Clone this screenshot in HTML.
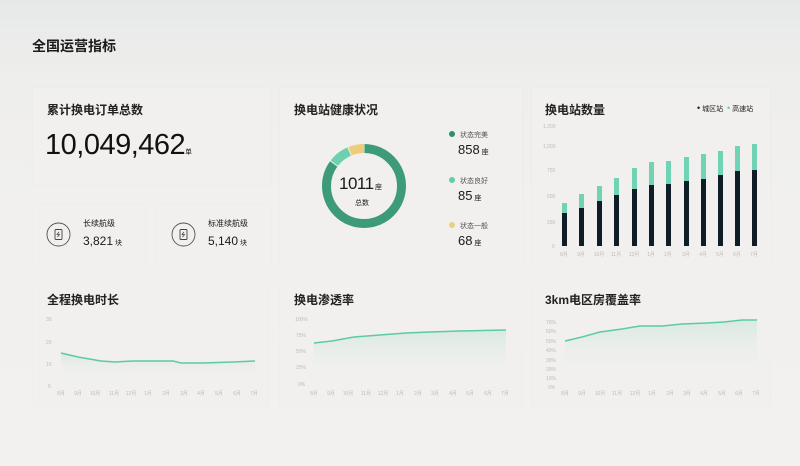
<!DOCTYPE html>
<html><head><meta charset="utf-8"><style>
*{margin:0;padding:0;box-sizing:border-box}
body{width:800px;height:466px;overflow:hidden;background:linear-gradient(#e7e9e9 0,#eeeeec 80px,#f1f0ee 200px,#f2f1ef 466px);font-family:"Liberation Sans","Noto Sans CJK SC",sans-serif;color:#1a1a1a;position:relative}
.c{position:absolute;background:#f1f0ee;box-shadow:0 0 3px rgba(0,0,0,0.03)}
.t{position:absolute;font-size:12px;font-weight:bold;color:#222}
.a{position:absolute}
</style></head><body>
<div class="a" style="left:32px;top:36px;font-size:14px;font-weight:bold">全国运营指标</div>

<div class="c" style="left:33px;top:88px;width:237px;height:97px"></div>
<div class="t" style="left:47px;top:101px">累计换电订单总数</div>
<div class="a" style="left:45px;top:129px;font-size:29px;letter-spacing:-0.5px;color:#111">10,049,462</div>
<div class="a" style="left:185px;top:147px;font-size:7px">单</div>

<div class="c" style="left:33px;top:205px;width:112px;height:63px"></div>
<div class="c" style="left:157px;top:205px;width:113px;height:63px"></div>
<svg class="a" style="left:46px;top:222px" width="25" height="25"><circle cx="12.5" cy="12.5" r="11.5" fill="none" stroke="#555" stroke-width="0.9"/><rect x="9" y="7.5" width="7" height="10" rx="1" fill="none" stroke="#444" stroke-width="0.9"/><path d="M13 10l-2 2.5h2.5l-2 2.5" fill="none" stroke="#444" stroke-width="0.8"/></svg>
<svg class="a" style="left:171px;top:222px" width="25" height="25"><circle cx="12.5" cy="12.5" r="11.5" fill="none" stroke="#555" stroke-width="0.9"/><rect x="9" y="7.5" width="7" height="10" rx="1" fill="none" stroke="#444" stroke-width="0.9"/><path d="M13 10l-2 2.5h2.5l-2 2.5" fill="none" stroke="#444" stroke-width="0.8"/></svg>
<div class="a" style="left:83px;top:218px;font-size:8px">长续航级</div>
<div class="a" style="left:83px;top:234px;font-size:12px">3,821<span style="font-size:7px"> 块</span></div>
<div class="a" style="left:208px;top:218px;font-size:8px">标准续航级</div>
<div class="a" style="left:208px;top:234px;font-size:12px">5,140<span style="font-size:7px"> 块</span></div>

<div class="c" style="left:280px;top:88px;width:242px;height:180px"></div>
<div class="t" style="left:294px;top:101px">换电站健康状况</div>
<svg class="a" style="left:318px;top:140px" width="92" height="92" viewBox="0 0 92 92">
<g transform="rotate(-90 46 46)" fill="none" stroke-width="9">
<circle cx="46" cy="46" r="37.5" stroke="#3d9b78" stroke-dasharray="199.5 236" stroke-dashoffset="-0.5"/>
<circle cx="46" cy="46" r="37.5" stroke="#6fd0b0" stroke-dasharray="19 236" stroke-dashoffset="-201"/>
<circle cx="46" cy="46" r="37.5" stroke="#edcc7a" stroke-dasharray="14.5 236" stroke-dashoffset="-221"/>
</g></svg>
<div class="a" style="left:339px;top:174px;font-size:17px;letter-spacing:-0.5px">1011<span style="font-size:7px"> 座</span></div>
<div class="a" style="left:355px;top:198px;font-size:7px">总数</div>
<div class="a" style="left:449px;top:131px;width:6px;height:6px;border-radius:3px;background:#2e8f6b"></div>
<div class="a" style="left:460px;top:130px;font-size:7px;color:#555">状态完美</div>
<div class="a" style="left:458px;top:142px;font-size:13px">858<span style="font-size:7px"> 座</span></div>
<div class="a" style="left:449px;top:177px;width:6px;height:6px;border-radius:3px;background:#5fcfa9"></div>
<div class="a" style="left:460px;top:176px;font-size:7px;color:#555">状态良好</div>
<div class="a" style="left:458px;top:188px;font-size:13px">85<span style="font-size:7px"> 座</span></div>
<div class="a" style="left:449px;top:222px;width:6px;height:6px;border-radius:3px;background:#eccf80"></div>
<div class="a" style="left:460px;top:221px;font-size:7px;color:#555">状态一般</div>
<div class="a" style="left:458px;top:233px;font-size:13px">68<span style="font-size:7px"> 座</span></div>

<div class="c" style="left:532px;top:88px;width:238px;height:180px"></div>
<div class="t" style="left:545px;top:101px">换电站数量</div>
<div class="a" style="left:697px;top:103px;font-size:7px"><span style="font-size:9px">•</span> 城区站 &nbsp;<span style="color:#5fcfa9;font-size:9px">•</span> 高速站</div>
<svg class="a" style="left:532px;top:115px" width="238" height="150" font-size="5" fill="#bbb" font-family="Liberation Sans">
<text x="11" y="13">1,200</text><text x="11" y="33">1,000</text><text x="15" y="57">750</text><text x="15" y="83">500</text><text x="15" y="109">250</text><text x="20" y="133">0</text>
<g id="bars"></g>
</svg>
<svg class="a" style="left:532px;top:115px" width="238" height="150">
<g fill="#6fd3b4">
<rect x="30" y="88" width="5" height="43"/><rect x="47" y="79" width="5" height="52"/><rect x="65" y="71" width="5" height="60"/><rect x="82" y="63" width="5" height="68"/><rect x="100" y="53" width="5" height="78"/><rect x="117" y="47" width="5" height="84"/><rect x="134" y="46" width="5" height="85"/><rect x="152" y="42" width="5" height="89"/><rect x="169" y="39" width="5" height="92"/><rect x="186" y="36" width="5" height="95"/><rect x="203" y="31" width="5" height="100"/><rect x="220" y="29" width="5" height="102"/>
</g>
<g fill="#0f1d26">
<rect x="30" y="98" width="5" height="33"/><rect x="47" y="93" width="5" height="38"/><rect x="65" y="86" width="5" height="45"/><rect x="82" y="80" width="5" height="51"/><rect x="100" y="74" width="5" height="57"/><rect x="117" y="70" width="5" height="61"/><rect x="134" y="69" width="5" height="62"/><rect x="152" y="66" width="5" height="65"/><rect x="169" y="64" width="5" height="67"/><rect x="186" y="60" width="5" height="71"/><rect x="203" y="56" width="5" height="75"/><rect x="220" y="55" width="5" height="76"/>
</g>
<g font-size="5" fill="#bbb" font-family="Liberation Sans,Noto Sans CJK SC" text-anchor="middle">
<text x="32" y="141">8月</text><text x="49" y="141">9月</text><text x="67" y="141">10月</text><text x="84" y="141">11月</text><text x="102" y="141">12月</text><text x="119" y="141">1月</text><text x="136" y="141">2月</text><text x="154" y="141">3月</text><text x="171" y="141">4月</text><text x="188" y="141">5月</text><text x="205" y="141">6月</text><text x="222" y="141">7月</text>
</g></svg>

<div class="c" style="left:33px;top:283px;width:235px;height:124px"></div>
<div class="t" style="left:47px;top:291px">全程换电时长</div>
<svg class="a" style="left:33px;top:283px" width="235" height="124" font-family="Liberation Sans,Noto Sans CJK SC">
<defs><linearGradient id="g" x1="0" y1="0" x2="0" y2="1"><stop offset="0" stop-color="#cfe6de" stop-opacity=".7"/><stop offset="1" stop-color="#f1f0ee" stop-opacity="0"/></linearGradient></defs>
<g font-size="5" fill="#bbb"><text x="13" y="38">30</text><text x="13" y="61">20</text><text x="13" y="83">10</text><text x="15" y="105">5</text></g>
<path d="M28 70L45 74L68 78L82 79L100 78L118 78L140 78L148 80L170 80L200 79L222 78V95H28Z" fill="url(#g)"/>
<path d="M28 70L45 74L68 78L82 79L100 78L118 78L140 78L148 80L170 80L200 79L222 78" fill="none" stroke="#5ccaa6" stroke-width="1.5"/>
<g font-size="5" fill="#bbb" text-anchor="middle"><text x="28" y="112">8月</text><text x="45" y="112">9月</text><text x="62" y="112">10月</text><text x="81" y="112">11月</text><text x="98" y="112">12月</text><text x="115" y="112">1月</text><text x="133" y="112">2月</text><text x="151" y="112">3月</text><text x="168" y="112">4月</text><text x="186" y="112">5月</text><text x="204" y="112">6月</text><text x="221" y="112">7月</text></g>
</svg>

<div class="c" style="left:280px;top:283px;width:242px;height:124px"></div>
<div class="t" style="left:294px;top:291px">换电渗透率</div>
<svg class="a" style="left:280px;top:283px" width="242" height="124" font-family="Liberation Sans,Noto Sans CJK SC">
<g font-size="5" fill="#bbb"><text x="15" y="38">100%</text><text x="16" y="54">75%</text><text x="16" y="70">50%</text><text x="16" y="86">25%</text><text x="18" y="103">0%</text></g>
<path d="M34 60L52 58L74 54L100 52L126 50L150 49L180 48L226 47V95H34Z" fill="url(#g)"/>
<path d="M34 60L52 58L74 54L100 52L126 50L150 49L180 48L226 47" fill="none" stroke="#5ccaa6" stroke-width="1.5"/>
<g font-size="5" fill="#bbb" text-anchor="middle"><text x="34" y="112">8月</text><text x="51" y="112">9月</text><text x="68" y="112">10月</text><text x="86" y="112">11月</text><text x="103" y="112">12月</text><text x="120" y="112">1月</text><text x="138" y="112">2月</text><text x="155" y="112">3月</text><text x="173" y="112">4月</text><text x="190" y="112">5月</text><text x="208" y="112">6月</text><text x="225" y="112">7月</text></g>
</svg>

<div class="c" style="left:532px;top:283px;width:238px;height:124px"></div>
<div class="t" style="left:545px;top:291px">3km电区房覆盖率</div>
<svg class="a" style="left:532px;top:283px" width="238" height="124" font-family="Liberation Sans,Noto Sans CJK SC">
<g font-size="5" fill="#bbb"><text x="14" y="41">70%</text><text x="14" y="50">60%</text><text x="14" y="60">50%</text><text x="14" y="69">40%</text><text x="14" y="79">30%</text><text x="14" y="88">20%</text><text x="14" y="97">10%</text><text x="16" y="106">0%</text></g>
<path d="M33 58L50 54L68 49L90 46L108 43L130 43L150 41L175 40L192 39L210 37L225 37V95H33Z" fill="url(#g)"/>
<path d="M33 58L50 54L68 49L90 46L108 43L130 43L150 41L175 40L192 39L210 37L225 37" fill="none" stroke="#5ccaa6" stroke-width="1.5"/>
<g font-size="5" fill="#bbb" text-anchor="middle"><text x="33" y="112">8月</text><text x="50" y="112">9月</text><text x="68" y="112">10月</text><text x="85" y="112">11月</text><text x="103" y="112">12月</text><text x="120" y="112">1月</text><text x="138" y="112">2月</text><text x="155" y="112">3月</text><text x="172" y="112">4月</text><text x="190" y="112">5月</text><text x="207" y="112">6月</text><text x="224" y="112">7月</text></g>
</svg>
</body></html>
